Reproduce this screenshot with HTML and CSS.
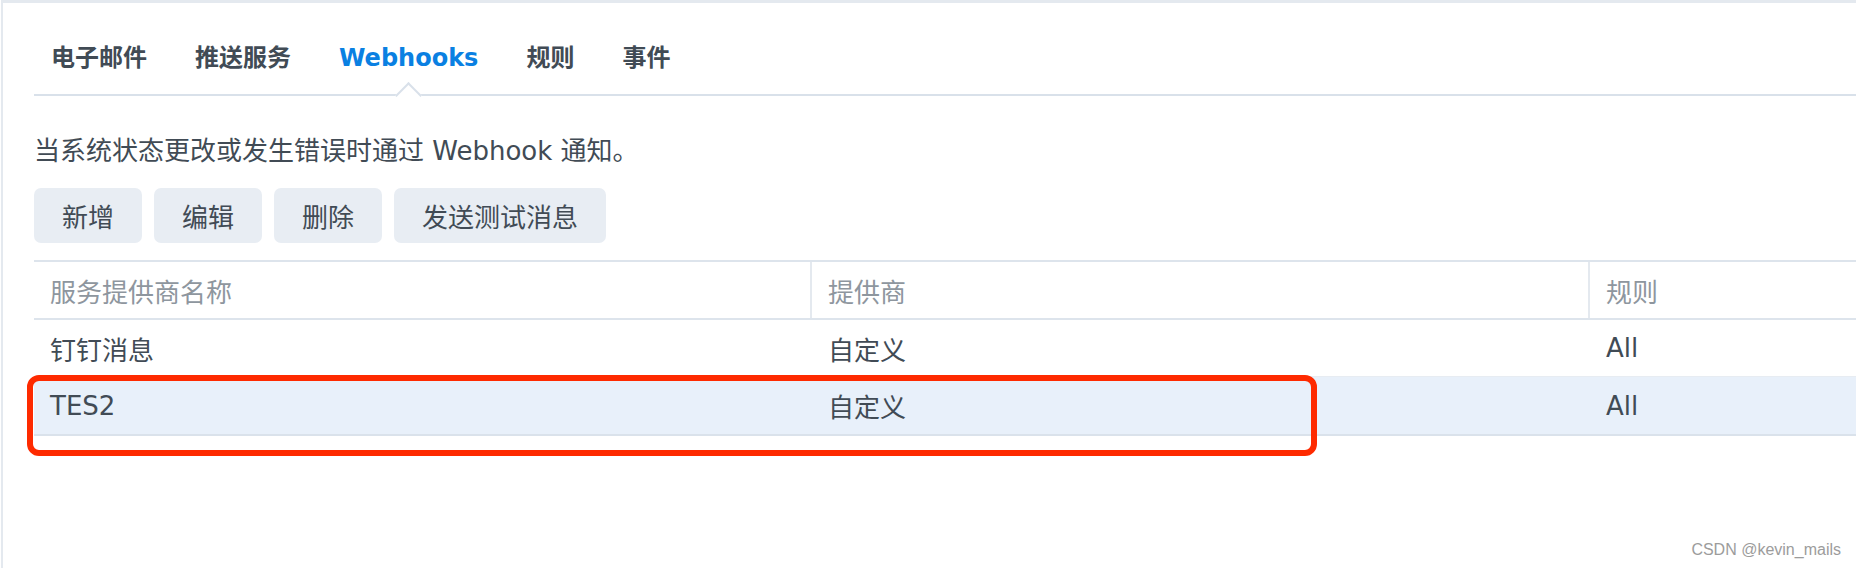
FILE: index.html
```html
<!DOCTYPE html>
<html lang="zh-CN">
<head>
<meta charset="utf-8">
<title>Webhooks</title>
<link rel="stylesheet" href="styles.css">
</head>
<body>
<div class="frame">
  <nav class="tabs">
    <span class="tab">电子邮件</span>
    <span class="tab">推送服务</span>
    <span class="tab active">Webhooks</span>
    <span class="tab">规则</span>
    <span class="tab">事件</span>
  </nav>
  <p class="desc">当系统状态更改或发生错误时通过 Webhook 通知。</p>
  <div class="toolbar">
    <button class="btn">新增</button>
    <button class="btn">编辑</button>
    <button class="btn">删除</button>
    <button class="btn">发送测试消息</button>
  </div>
  <div class="grid">
    <div class="row head">
      <div class="cell">服务提供商名称</div>
      <div class="cell">提供商</div>
      <div class="cell">规则</div>
    </div>
    <div class="row first">
      <div class="cell">钉钉消息</div>
      <div class="cell">自定义</div>
      <div class="cell">All</div>
    </div>
    <div class="row selected">
      <div class="cell">TES2</div>
      <div class="cell">自定义</div>
      <div class="cell">All</div>
    </div>
    <div class="highlight"></div>
  </div>
</div>
<div class="watermark">CSDN @kevin_mails</div>
</body>
</html>
```
FILE: styles.css
```css
html, body {
  margin: 0;
  padding: 0;
  background: #ffffff;
}
body {
  width: 1856px;
  height: 568px;
  overflow: hidden;
  position: relative;
  font-family: "DejaVu Sans", "Noto Sans CJK SC", sans-serif;
  color: #414b55;
}
.frame {
  box-sizing: border-box;
  height: 568px;
  margin-left: 1px;
  border-top: 3px solid #e4e9ef;
  border-left: 2px solid #e4e9ef;
  padding-left: 31px;
  overflow: hidden;
}
.tabs {
  display: flex;
  gap: 48px;
  padding-left: 17px;
  padding-top: 39px;
  border-bottom: 2px solid #d9e1ea;
}
.tab {
  position: relative;
  font-size: 24px;
  font-weight: bold;
  line-height: 32px;
  padding-bottom: 20px;
  color: #414b55;
  white-space: nowrap;
}
.tab.active {
  color: #0a80e2;
}
.tab.active::after {
  content: "";
  position: absolute;
  left: 50%;
  bottom: -11px;
  width: 19px;
  height: 19px;
  box-sizing: border-box;
  margin-left: -9.5px;
  background: #ffffff;
  border-top: 2px solid #d9e1ea;
  border-left: 2px solid #d9e1ea;
  transform: rotate(45deg);
}
.desc {
  margin: 37px 0 0 0;
  font-size: 26px;
  line-height: 36px;
  color: #414b55;
}
.toolbar {
  display: flex;
  gap: 12px;
  margin-top: 19px;
}
.btn {
  font-family: "DejaVu Sans", "Noto Sans CJK SC", sans-serif;
  font-size: 26px;
  color: #414b55;
  height: 55px;
  padding: 0 28px;
  border: none;
  border-radius: 7px;
  background: #e8edf3;
}
.grid {
  position: relative;
  margin-top: 17px;
  width: 2400px;
  border-top: 2px solid #dde4ec;
}
.row {
  display: grid;
  grid-template-columns: 778px 778px 1fr;
  font-size: 26px;
}
.cell {
  box-sizing: border-box;
  padding-left: 16px;
  display: flex;
  align-items: center;
  white-space: nowrap;
}
.head {
  height: 56px;
  border-bottom: 2px solid #dde4ec;
  color: #8e969e;
}
.head .cell:nth-child(1),
.head .cell:nth-child(2) {
  border-right: 2px solid #e4e9ef;
}
.first {
  height: 56px;
  border-bottom: 1px solid #e7ecf2;
}
.selected {
  height: 57px;
  background: #e8f0fa;
  border-bottom: 2px solid #dae2eb;
}
.highlight {
  position: absolute;
  left: -7px;
  top: 113px;
  width: 1290px;
  height: 81px;
  box-sizing: border-box;
  border: 6px solid #fe2a00;
  border-radius: 12px;
}
.watermark {
  position: absolute;
  right: 15px;
  top: 540px;
  font-family: "Liberation Sans", Arial, sans-serif;
  font-size: 16px;
  line-height: 20px;
  color: #9c9c9c;
}
```
